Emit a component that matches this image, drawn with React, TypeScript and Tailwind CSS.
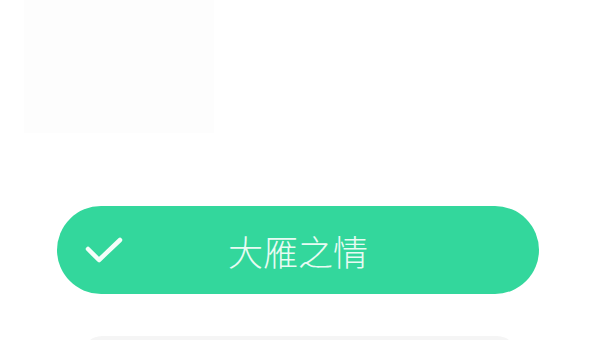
export default function App() {
  return (
    <div className="h-[340px] w-[600px] overflow-hidden bg-white flex flex-col" style={{ fontFamily: '"Noto Sans CJK SC", "Noto Sans", sans-serif' }}>
      {/* faint card left over at the top */}
      <div className="ml-[24px] h-[133px] w-[190px] bg-[#fdfdfd] shrink-0" />

      {/* selected option */}
      <button
        type="button"
        className="mt-[73px] ml-[57px] h-[88px] w-[482px] shrink-0 rounded-full bg-[#33d79c] flex items-center"
      >
        <span className="pl-[28px] w-[66px] flex items-center">
          <svg width="38" height="28" viewBox="0 0 38 28" fill="none" stroke="#f4fdf9" strokeWidth="4.5" strokeLinecap="round" strokeLinejoin="round">
            <path d="M3 13 L14 24 L35 4" />
          </svg>
        </span>
        <span className="flex-1 text-center text-[35px] font-light leading-none text-[#e8fbf3]">大雁之情</span>
        <span className="w-[66px]" />
      </button>

      {/* next option, cut off */}
      <div className="mt-[42px] ml-[82px] h-[40px] w-[435px] shrink-0 rounded-t-[20px] bg-[#f5f5f5]" />
    </div>
  );
}
